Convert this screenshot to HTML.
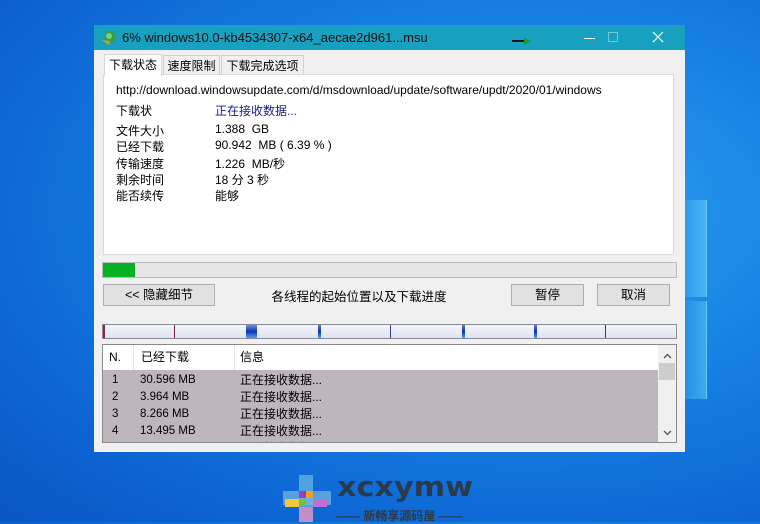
<!DOCTYPE html>
<html><head><meta charset="utf-8"><style>
*{margin:0;padding:0;box-sizing:border-box}
body{width:760px;height:522px;overflow:hidden;position:relative;font-family:"Liberation Sans","Noto Sans CJK SC",sans-serif;font-size:12px;color:#000;
background:radial-gradient(ellipse at 70% 40%,#2fa2ee 0%,#1782e4 40%,#0d66d4 75%,#0a55c4 100%);}
.abs{position:absolute}
.win{left:94px;top:25px;width:591px;height:427px;background:#f0f0f0}
.title{left:0;top:0;width:591px;height:25px;background:#17a0bf;color:#111;font-size:13px}
.tab{position:absolute;top:30px;height:20px;border:1px solid #d0d0d0;border-bottom:none;background:#f0f0f0;font-size:12px;line-height:21px;text-align:center}
.panel{left:9px;top:49px;width:571px;height:181px;background:#fff;border:1px solid #dadada}
.row{position:absolute;left:12px;font-size:12px;white-space:nowrap}
.btn{position:absolute;top:259px;height:22px;background:#e1e1e1;border:1px solid #adadad;text-align:center;line-height:20px;font-size:12.5px}
.lrow{position:absolute;left:0;width:553px;height:17px;font-size:11.5px;line-height:17px}
</style></head><body>
<div class="abs" style="left:685px;top:200px;width:22px;height:97px;background:linear-gradient(90deg,#2c9cec,#48b4f6);border-right:1px solid #6ccaf8"></div>
<div class="abs" style="left:685px;top:301px;width:22px;height:98px;background:linear-gradient(90deg,#2490e6,#3caaf2);border-right:1px solid #6ccaf8"></div>

<div class="abs win">
 <div class="abs title">
  <svg class="abs" style="left:7px;top:5px" width="16" height="16" viewBox="0 0 16 16"><circle cx="9" cy="7" r="5.5" fill="#3a9a3a"/><circle cx="8" cy="6" r="3" fill="#7bd27b"/><path d="M1 10 L8 15 L9 11 Z" fill="#c9a22a"/></svg>
  <div class="abs" style="left:28px;top:5px;font-size:13px">6% windows10.0-kb4534307-x64_aecae2d961...msu</div>
  <svg class="abs" style="left:418px;top:13px" width="20" height="8"><rect x="0" y="2" width="13" height="2" fill="#111"/><path d="M12 0 L19 3 L12 7 Z" fill="#1c9a2c"/></svg>
  <div class="abs" style="left:490px;top:13px;width:11px;height:1px;background:#fff"></div>
  <div class="abs" style="left:514px;top:7px;width:10px;height:10px;border:1px solid #6fc8dc"></div>
  <svg class="abs" style="left:558px;top:6px" width="12" height="12"><path d="M1 1 L11 11 M11 1 L1 11" stroke="#fff" stroke-width="1.2"/></svg>
 </div>
 <div class="tab" style="left:10px;top:29px;width:58px;height:22px;background:#fff;z-index:2;border-color:#d6d6d6">下载状态</div>
 <div class="tab" style="left:69px;width:57px">速度限制</div>
 <div class="tab" style="left:127px;width:83px">下载完成选项</div>
 <div class="abs panel">
  <div class="row" style="top:8px;width:518px;overflow:hidden">http://download.windowsupdate.com/d/msdownload/update/software/updt/2020/01/windows</div>
  <div class="row" style="top:27px">下载状</div><div class="row" style="top:27px;left:111px;color:#1a1a8a">正在接收数据...</div>
  <div class="row" style="top:47px">文件大小</div><div class="row" style="top:47px;left:111px">1.388&nbsp; GB</div>
  <div class="row" style="top:63px">已经下载</div><div class="row" style="top:63px;left:111px">90.942&nbsp; MB ( 6.39 % )</div>
  <div class="row" style="top:80px">传输速度</div><div class="row" style="top:80px;left:111px">1.226&nbsp; MB/秒</div>
  <div class="row" style="top:96px">剩余时间</div><div class="row" style="top:96px;left:111px">18 分 3 秒</div>
  <div class="row" style="top:112px">能否续传</div><div class="row" style="top:112px;left:111px">能够</div>
 </div>
 <div class="abs" style="left:8px;top:237px;width:575px;height:16px;background:#e6e6e6;border:1px solid #bcbcbc"><div style="width:32px;height:14px;background:#06b025"></div></div>
 <div class="btn" style="left:9px;width:112px">&lt;&lt; 隐藏细节</div>
 <div class="abs" style="left:150px;top:261px;width:230px;text-align:center;font-size:12.5px">各线程的起始位置以及下载进度</div>
 <div class="btn" style="left:417px;width:73px">暂停</div>
 <div class="btn" style="left:503px;width:73px">取消</div>
 <div class="abs" style="left:8px;top:299px;width:575px;height:15px;border:1px solid #8a8a9a;background:linear-gradient(#f4f6fc,#dfe3f0)">
  <div class="abs" style="left:0;top:0;width:2px;height:13px;background:#a02040"></div>
  <div class="abs" style="left:71px;top:0;width:1px;height:13px;background:#802040"></div>
  <div class="abs" style="left:143px;top:0;width:11px;height:13px;background:linear-gradient(#7090e0,#1030b0 50%,#50a0f0)"></div>
  <div class="abs" style="left:215px;top:0;width:3px;height:13px;background:linear-gradient(#5080e0,#1030b0,#40a0f0)"></div>
  <div class="abs" style="left:287px;top:0;width:1px;height:13px;background:#304080"></div>
  <div class="abs" style="left:359px;top:0;width:3px;height:13px;background:linear-gradient(#5080e0,#1030b0,#40a0f0)"></div>
  <div class="abs" style="left:431px;top:0;width:3px;height:13px;background:linear-gradient(#5080e0,#1030b0,#40a0f0)"></div>
  <div class="abs" style="left:502px;top:0;width:1px;height:13px;background:#802040"></div>
 </div>
 <div class="abs" style="left:8px;top:319px;width:575px;height:99px;border:1px solid #8a8a8a;background:#bfb5bd;overflow:hidden">
  <div class="abs" style="left:0;top:0;width:555px;height:25px;background:#fff;font-size:12px;line-height:25px">
   <span class="abs" style="left:6px">N.</span>
   <div class="abs" style="left:30px;top:0;width:1px;height:25px;background:#e5e5e5"></div>
   <span class="abs" style="left:38px">已经下载</span>
   <div class="abs" style="left:131px;top:0;width:1px;height:25px;background:#e5e5e5"></div>
   <span class="abs" style="left:137px">信息</span>
  </div>
  <div class="lrow" style="top:27px"><span class="abs" style="left:9px">1</span><span class="abs" style="left:37px">30.596 MB</span><span class="abs" style="left:137px;font-size:12px">正在接收数据...</span></div>
  <div class="lrow" style="top:44px"><span class="abs" style="left:9px">2</span><span class="abs" style="left:37px">3.964 MB</span><span class="abs" style="left:137px;font-size:12px">正在接收数据...</span></div>
  <div class="lrow" style="top:61px"><span class="abs" style="left:9px">3</span><span class="abs" style="left:37px">8.266 MB</span><span class="abs" style="left:137px;font-size:12px">正在接收数据...</span></div>
  <div class="lrow" style="top:78px"><span class="abs" style="left:9px">4</span><span class="abs" style="left:37px">13.495 MB</span><span class="abs" style="left:137px;font-size:12px">正在接收数据...</span></div>
  <div class="lrow" style="top:95px"><span class="abs" style="left:137px;font-size:12px">正在接收数据...</span></div>
  <div class="abs" style="left:555px;top:0;width:18px;height:97px;background:#f0f0f0">
   <svg class="abs" style="left:5px;top:8px" width="9" height="6"><path d="M1 5 L4.5 1.5 L8 5" stroke="#555" stroke-width="1.3" fill="none"/></svg>
   <div class="abs" style="left:1px;top:18px;width:16px;height:17px;background:#cdcdcd"></div>
   <svg class="abs" style="left:5px;top:85px" width="9" height="6"><path d="M1 1 L4.5 4.5 L8 1" stroke="#555" stroke-width="1.3" fill="none"/></svg>
  </div>
 </div>
</div>

<svg class="abs" style="left:283px;top:475px" width="48" height="47">
 <rect x="16" y="0" width="14" height="47" fill="#5fb0e0" opacity=".8"/>
 <rect x="0" y="16" width="48" height="14" fill="#7ab8e0" opacity=".7"/>
 <rect x="16" y="16" width="7" height="7" fill="#9040c0"/><rect x="23" y="16" width="7" height="7" fill="#f0a020"/>
 <rect x="2" y="24" width="14" height="8" fill="#f0c840"/><rect x="16" y="24" width="7" height="7" fill="#70c040"/>
 <rect x="30" y="24" width="14" height="8" fill="#c070d0"/><rect x="16" y="32" width="14" height="15" fill="#e08ac0" opacity=".8"/>
</svg>
<div class="abs" style="left:337px;top:472px;font-size:28px;font-weight:bold;color:#2a3a4a;font-family:'DejaVu Sans',sans-serif;line-height:30px;transform:scaleX(1.08);transform-origin:left">xcxymw</div>
<div class="abs" style="left:336px;top:507px;font-size:12px;font-weight:bold;color:#2a3a4a;white-space:nowrap">—— 新畅享源码屋 ——</div>
</body></html>
